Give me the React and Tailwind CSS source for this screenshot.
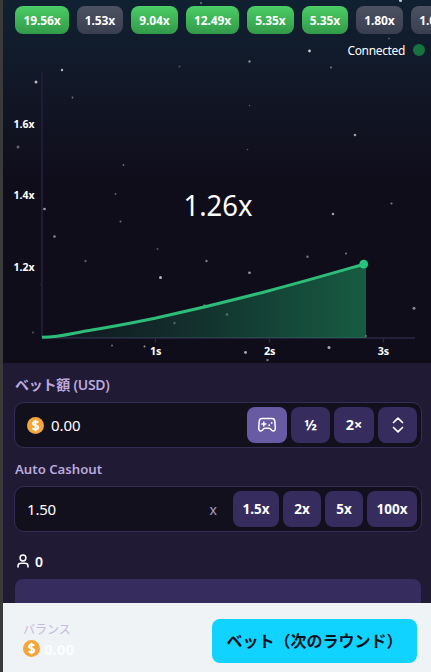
import React from "react";

const HISTORY = [
  { value: "19.56x", width: "w-[54px]", win: true },
  { value: "1.53x", width: "w-[46px]", win: false },
  { value: "9.04x", width: "w-[47px]", win: true },
  { value: "12.49x", width: "w-[53px]", win: true },
  { value: "5.35x", width: "w-[47px]", win: true },
  { value: "5.35x", width: "w-[46px]", win: true },
  { value: "1.80x", width: "w-[47px]", win: false },
  { value: "1.05x", width: "w-[47px]", win: false },
];

// x, y, radius, opacity
const STARS = [
  [201, 3, 1, 0.4], [400.5, 0.5, 1.5, 0.75], [62, 70, 1.2, 0.7], [36, 82, 1.5, 0.7],
  [72.5, 97.5, 0.9, 0.4], [179.5, 66.5, 1, 0.25], [309.5, 51, 1.4, 0.75], [249.5, 61.5, 1.2, 0.5],
  [331, 67.5, 1.1, 0.4], [249.5, 105.5, 0.8, 0.3], [389, 38.5, 1, 0.25], [18, 147, 1.5, 0.35],
  [123.5, 165, 0.9, 0.4], [115.5, 194, 0.9, 0.35], [44.5, 209, 1.3, 0.6], [120.5, 221.5, 1, 0.4],
  [54.5, 236.5, 1.3, 0.5], [355, 135, 1.3, 0.6], [247.5, 149.5, 0.8, 0.3], [391.5, 203.5, 1.1, 0.45],
  [333, 214, 1.3, 0.6], [157.5, 249, 1, 0.3], [85.5, 261, 1.2, 0.3], [206.5, 261, 1.2, 0.45],
  [160.5, 277.5, 1.5, 0.7], [41.5, 284.5, 1, 0.25], [33, 332.5, 1, 0.3], [112, 345.5, 1, 0.4],
  [144.5, 346.5, 1, 0.6], [174.5, 323, 1.2, 0.3], [204.5, 305.5, 1.2, 0.4], [249.5, 272.8, 1.3, 0.6],
  [307.5, 256.7, 1.3, 0.4], [346, 253.5, 1.1, 0.4], [227, 314.5, 1.3, 0.3], [414, 308.2, 1.5, 0.5],
  [245.5, 352.5, 1.4, 0.65], [329, 347.5, 1.5, 0.65], [267.5, 360, 1.3, 0.4], [366, 336, 1.2, 0.3],
];

function StarField() {
  return (
    <svg className="absolute inset-0 h-full w-full" viewBox="3 0 428 363" preserveAspectRatio="none">
      {STARS.map(([x, y, r, o]) => (
        <circle key={`${x}-${y}`} cx={x} cy={y} r={r} fill="#fff" opacity={o} />
      ))}
    </svg>
  );
}

function Chart() {
  return (
    <svg className="relative block h-[303px] w-[428px]" viewBox="3 60 428 303">
      <defs>
        <linearGradient id="area" gradientUnits="userSpaceOnUse" x1="42" x2="366" y1="0" y2="0">
          <stop offset="0" stopColor="#20c878" stopOpacity="0.03" />
          <stop offset="0.5" stopColor="#20c878" stopOpacity="0.2" />
          <stop offset="1" stopColor="#20c878" stopOpacity="0.42" />
        </linearGradient>
      </defs>
      <path d="M42 72V338" stroke="#201c38" strokeWidth="2" />
      <path d="M42 338H415M155.5 338v4.500M269.500 338v4.500M383.500 338v4.500" stroke="#2b2746" strokeWidth="1.300" fill="none" />
      <path
        d="M42 337.500C58 337.500 70 334 83 331.500C112 327 132 323 155 318.300C195 309.500 232 300.500 269 290.700C304 281.500 335 272.500 366 263.500V338H42Z"
        fill="url(#area)"
      />
      <path
        d="M42 337.300C58 337.300 70 334 83 331.500C112 327 132 323 155 318.300C195 309.500 232 300.500 269 290.700C304 281.500 335 272.500 364 264.200"
        fill="none"
        stroke="#2dbd78"
        strokeWidth="3"
      />
      <circle cx="363.7" cy="264.200" r="4.400" fill="#22c77c" />
      <g fill="#fff" fontFamily="'Noto Sans', sans-serif" fontSize="10.8" fontWeight="700">
        <text x="13.500" y="128" textLength="21" lengthAdjust="spacingAndGlyphs">1.6x</text>
        <text x="13.500" y="199" textLength="21" lengthAdjust="spacingAndGlyphs">1.4x</text>
        <text x="13.500" y="270.700" textLength="21" lengthAdjust="spacingAndGlyphs">1.2x</text>
        <text x="155.700" y="355" textAnchor="middle">1s</text>
        <text x="269.700" y="355" textAnchor="middle">2s</text>
        <text x="383.500" y="355" textAnchor="middle">3s</text>
      </g>
      <text
        x="183.500"
        y="216"
        fill="#fff"
        fontFamily="'Noto Sans', sans-serif"
        fontSize="29"
        textLength="69"
        lengthAdjust="spacingAndGlyphs"
      >
        1.26x
      </text>
    </svg>
  );
}

function Coin({ className }) {
  return (
    <svg className={className} viewBox="0 0 17 17" fill="none">
      <circle cx="8.5" cy="8.5" r="8.5" fill="#f5a53a" />
      <path
        d="M11.200 5.700C10.500 4.800 9.600 4.600 8.500 4.600C7 4.600 6 5.300 6 6.400C6 9 11.200 7.600 11.200 10.500C11.200 11.700 10 12.400 8.500 12.400C7.200 12.400 6.200 12 5.600 11.100M8.500 2.800V14.200"
        stroke="#fff"
        strokeWidth="1.900"
      />
    </svg>
  );
}

function GamepadIcon() {
  return (
    <svg
      className="h-4 w-5"
      viewBox="0 0 20 16"
      fill="none"
      stroke="currentColor"
      strokeWidth="1.500"
      strokeLinecap="round"
      strokeLinejoin="round"
    >
      <path d="M5 1.500H15C16.700 1.500 17.600 2.500 17.800 4.200L18.300 11.200C18.500 14 16.300 14.600 14.700 13.200C13.700 12.100 13.200 11.300 12 11.300H8C6.800 11.300 6.300 12.100 5.300 13.200C3.700 14.600 1.500 14 1.700 11.200L2.200 4.200C2.400 2.500 3.300 1.500 5 1.500Z" />
      <path d="M6.800 5V9M4.800 7H8.800" />
      <path d="M14.600 5.900H14.700M12.200 8.200H12.300" strokeWidth="1.800" />
    </svg>
  );
}

function SortIcon() {
  return (
    <svg
      className="h-4 w-3"
      viewBox="0 0 12 16"
      fill="none"
      stroke="currentColor"
      strokeWidth="1.700"
      strokeLinecap="round"
      strokeLinejoin="round"
    >
      <path d="M1.500 5.500L6 1.200L10.500 5.500M1.500 10.500L6 14.800L10.500 10.500" />
    </svg>
  );
}

function ActionButton({ className, children }) {
  return (
    <button className={`flex h-9 items-center justify-center rounded-lg font-bold text-white ${className}`}>
      {children}
    </button>
  );
}

export default function App() {
  return (
    <div className="flex h-[672px] w-[431px] flex-col overflow-hidden border-l-[3px] border-[#3a3a3a] bg-[#201a35] font-['Noto_Sans','Noto_Sans_CJK_JP',sans-serif] text-white">
      <section className="relative h-[363px] shrink-0 overflow-hidden bg-linear-to-b from-[#102131] from-0% to-[#100d1b] to-[50%]">
        <StarField />
        <div className="relative flex h-10 gap-2 pt-1.5 pl-3">
          {HISTORY.map((round, i) => (
            <span
              key={i}
              className={`flex h-7 shrink-0 items-center justify-center rounded-lg bg-linear-to-b pt-px text-[12px] font-bold tracking-[-0.1px] ${round.width} ${
                round.win ? "from-[#4acd65] to-[#329a49]" : "from-[#4c5262] to-[#3a3f4f]"
              }`}
            >
              {round.value}
            </span>
          ))}
        </div>
        <div className="relative flex h-5 items-center justify-end gap-2 pr-1.5 text-[12px]">
          <span className="pt-0.5 tracking-[-0.35px]">Connected</span>
          <span className="h-3 w-3 rounded-full bg-[#187240]" />
        </div>
        <Chart />
      </section>

      <section className="h-60 shrink-0 overflow-hidden px-[11px]">
        <label className="mt-3 flex h-5 items-center pb-0.5 pl-px text-[14px] font-semibold tracking-[-0.25px] text-[#b9a9dc]">
          ベット額 (USD)
        </label>
        <div className="mt-[7px] flex h-[46px] w-[408px] items-center gap-1 rounded-[10px] border border-[#352e54] bg-[#13101e] pr-1 pl-3">
          <Coin className="h-[17px] w-[17px]" />
          <span className="ml-[3px] flex-1 text-[15px] tracking-[-0.1px]">0.00</span>
          <ActionButton className="w-10 bg-[#695ba3]">
            <GamepadIcon />
          </ActionButton>
          <ActionButton className="w-[39px] bg-[#362c5e] text-[14.5px]">½</ActionButton>
          <ActionButton className="w-10 bg-[#362c5e] text-[14.5px]">2×</ActionButton>
          <ActionButton className="w-[39px] bg-[#362c5e]">
            <SortIcon />
          </ActionButton>
        </div>

        <label className="mt-[11px] flex h-5 items-center pt-0.5 pl-px text-[13.2px] font-semibold text-[#b9a9dc]">
          Auto Cashout
        </label>
        <div className="mt-[7px] flex h-[46px] w-[408px] items-center gap-1 rounded-[10px] border border-[#352e54] bg-[#13101e] pr-1 pl-3">
          <span className="flex-1 text-[15px] tracking-[-0.2px]">1.50</span>
          <span className="mr-3 text-[14px] text-[#a99cc4]">x</span>
          <ActionButton className="w-[46px] bg-[#362c5e] text-[13.5px]">1.5x</ActionButton>
          <ActionButton className="w-[38px] bg-[#362c5e] text-[13.5px]">2x</ActionButton>
          <ActionButton className="w-[38px] bg-[#362c5e] text-[13.5px]">5x</ActionButton>
          <ActionButton className="w-[50px] bg-[#362c5e] text-[13.5px]">100x</ActionButton>
        </div>

        <div className="mt-[19px] flex h-5 items-center gap-1.5 pl-[3px]">
          <svg className="h-[14px] w-3" viewBox="0 0 12 14" fill="none" stroke="currentColor" strokeWidth="1.500" strokeLinecap="round">
            <circle cx="6" cy="4" r="2.900" />
            <path d="M1 13V12C1 10.200 2.200 9.300 4 9.300H8C9.800 9.300 11 10.200 11 12V13" />
          </svg>
          <span className="text-[14px] font-semibold">0</span>
        </div>
        <div className="mt-2 ml-px h-10 w-[406px] rounded-lg bg-[#362c5e]" />
      </section>

      <footer className="flex h-[69px] shrink-0 items-center justify-between bg-[#eff3f6] pr-3.5 pl-5">
        <div className="pt-1">
          <div className="text-[12px] leading-[18px] text-[#c5b9df]">バランス</div>
          <div className="flex h-5 items-center gap-1">
            <Coin className="h-[17px] w-[17px]" />
            <span className="pt-0.5 text-[15px] font-bold text-[#fbfdff]">0.00</span>
          </div>
        </div>
        <button className="mt-[7px] h-11 w-[205px] rounded-lg bg-[#10d4ff] text-[16px] font-bold whitespace-nowrap text-[#08101f]">
          ベット（次のラウンド）
        </button>
      </footer>
    </div>
  );
}
